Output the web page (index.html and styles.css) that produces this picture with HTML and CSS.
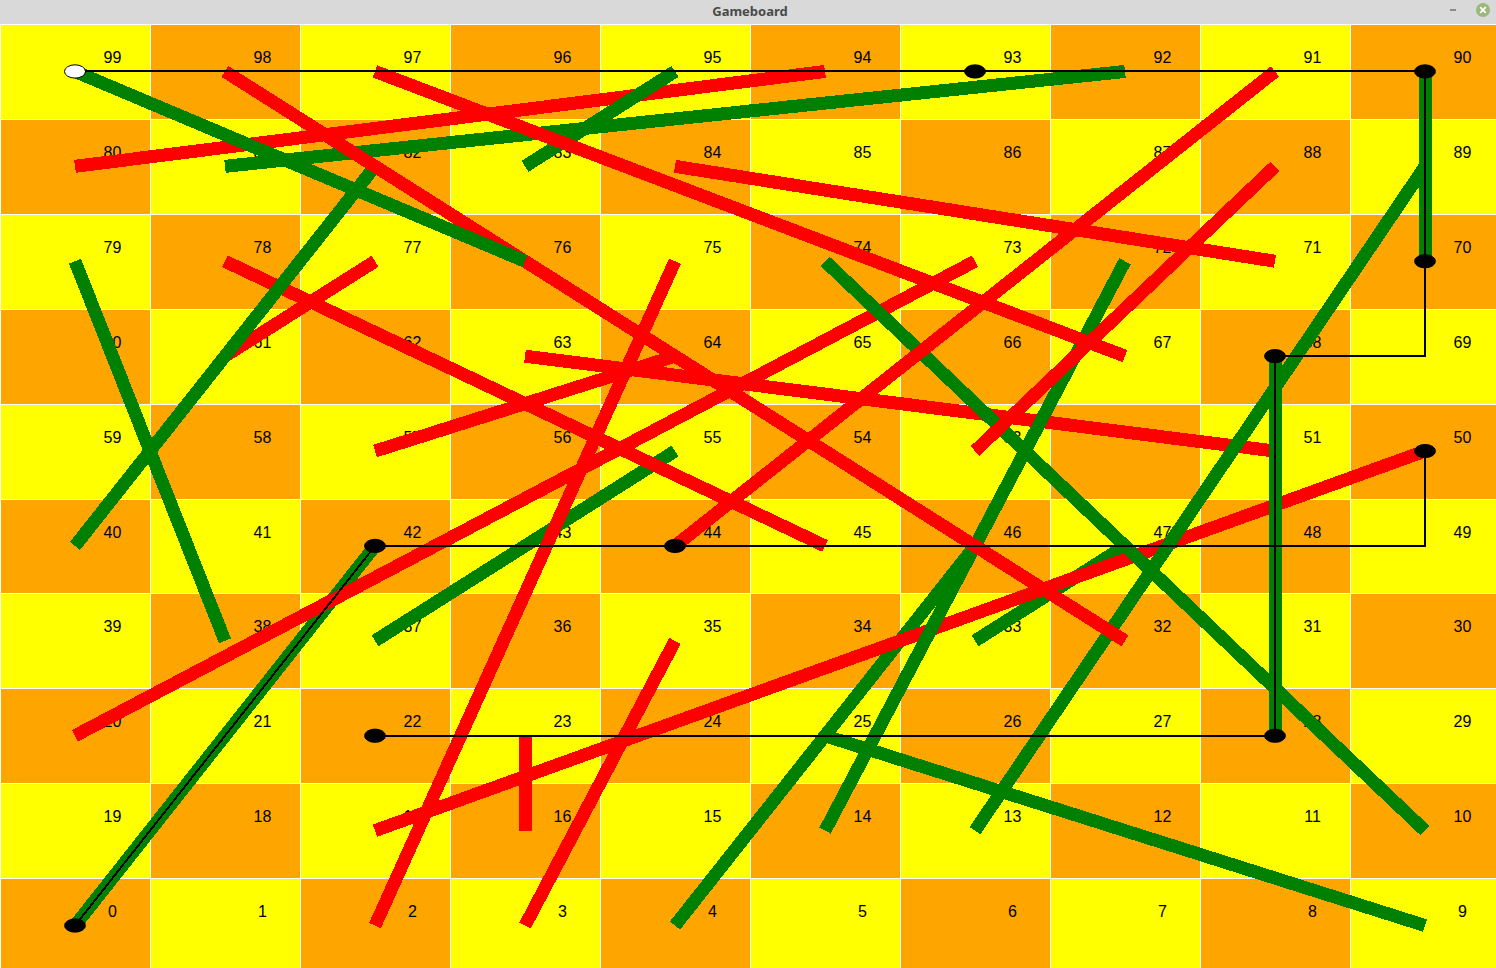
FILE: index.html
```html
<!DOCTYPE html>
<html lang="en">
<head>
<meta charset="utf-8">
<title>Gameboard</title>
<link rel="stylesheet" href="styles.css">
</head>
<body>
<header class="titlebar">
  <h1 class="title">Gameboard</h1>
  <div class="controls">
    <button class="control" type="button" aria-label="Minimize">
      <svg viewBox="0 0 14 14" width="14" height="14"><path d="M4 7h6" stroke="#8a8a8a" stroke-width="2"/></svg>
    </button>
    <button class="control" type="button" aria-label="Close">
      <svg viewBox="0 0 14 14" width="14" height="14"><circle cx="7" cy="7" r="7" fill="#9ab87c"/><path d="M4.2 4.2l5.6 5.6M9.8 4.2l-5.6 5.6" stroke="#fff" stroke-width="1.8"/></svg>
    </button>
  </div>
</header>
<main class="viewport">
  <div class="board">
    <div class="row"><span>99</span><span>98</span><span>97</span><span>96</span><span>95</span><span>94</span><span>93</span><span>92</span><span>91</span><span>90</span></div>
    <div class="row"><span>80</span><span>81</span><span>82</span><span>83</span><span>84</span><span>85</span><span>86</span><span>87</span><span>88</span><span>89</span></div>
    <div class="row"><span>79</span><span>78</span><span>77</span><span>76</span><span>75</span><span>74</span><span>73</span><span>72</span><span>71</span><span>70</span></div>
    <div class="row"><span>60</span><span>61</span><span>62</span><span>63</span><span>64</span><span>65</span><span>66</span><span>67</span><span>68</span><span>69</span></div>
    <div class="row"><span>59</span><span>58</span><span>57</span><span>56</span><span>55</span><span>54</span><span>53</span><span>52</span><span>51</span><span>50</span></div>
    <div class="row"><span>40</span><span>41</span><span>42</span><span>43</span><span>44</span><span>45</span><span>46</span><span>47</span><span>48</span><span>49</span></div>
    <div class="row"><span>39</span><span>38</span><span>37</span><span>36</span><span>35</span><span>34</span><span>33</span><span>32</span><span>31</span><span>30</span></div>
    <div class="row"><span>20</span><span>21</span><span>22</span><span>23</span><span>24</span><span>25</span><span>26</span><span>27</span><span>28</span><span>29</span></div>
    <div class="row"><span>19</span><span>18</span><span>17</span><span>16</span><span>15</span><span>14</span><span>13</span><span>12</span><span>11</span><span>10</span></div>
    <div class="row"><span>0</span><span>1</span><span>2</span><span>3</span><span>4</span><span>5</span><span>6</span><span>7</span><span>8</span><span>9</span></div>

    <!-- 100 units per square in both directions -->
    <svg class="overlay" viewBox="0 0 1000 1000" preserveAspectRatio="none" aria-hidden="true">
      <!-- snakes and ladders, ordered by their upper square -->
      <path class="snake" d="M350 750L350 850"/>
      <path class="ladder" d="M550 750L950 950"/>
      <path class="snake" d="M450 650L350 950"/>
      <path class="ladder" d="M50 950L250 550"/>
      <path class="ladder" d="M450 950L650 550"/>
      <path class="ladder" d="M650 650L750 550"/>
      <path class="snake" d="M950 450L250 850"/>
      <path class="ladder" d="M250 650L450 450"/>
      <path class="snake" d="M350 350L850 450"/>
      <path class="snake" d="M450 350L250 450"/>
      <path class="ladder" d="M850 750L850 350"/>
      <path class="ladder" d="M550 850L750 250"/>
      <path class="snake" d="M650 250L50 750"/>
      <path class="ladder" d="M950 850L550 250"/>
      <path class="snake" d="M450 250L250 950"/>
      <path class="snake" d="M250 250L150 350"/>
      <path class="snake" d="M150 250L550 550"/>
      <path class="ladder" d="M150 650L50 250"/>
      <path class="ladder" d="M50 550L250 150"/>
      <path class="snake" d="M450 150L850 250"/>
      <path class="snake" d="M850 150L650 450"/>
      <path class="ladder" d="M650 850L950 150"/>
      <path class="ladder" d="M950 250L950 50"/>
      <path class="snake" d="M850 50L450 550"/>
      <path class="ladder" d="M150 150L750 50"/>
      <path class="snake" d="M550 50L50 150"/>
      <path class="ladder" d="M350 150L450 50"/>
      <path class="snake" d="M250 50L750 350"/>
      <path class="snake" d="M150 50L750 650"/>
      <path class="ladder" d="M350 250L50 50"/>

      <!-- moves -->
      <path class="move" d="M50 950L250 550H950V450"/>
      <path class="move" d="M250 750H850V350H950V50H50"/>

      <!-- stops -->
      <g class="stops">
        <circle cx="50" cy="950" r="7"/>
        <circle cx="250" cy="550" r="7"/>
        <circle cx="450" cy="550" r="7"/>
        <circle cx="950" cy="450" r="7"/>
        <circle cx="250" cy="750" r="7"/>
        <circle cx="850" cy="750" r="7"/>
        <circle cx="850" cy="350" r="7"/>
        <circle cx="950" cy="250" r="7"/>
        <circle cx="950" cy="50" r="7"/>
        <circle cx="650" cy="50" r="7"/>
        <circle class="current" cx="50" cy="50" r="7"/>
      </g>
    </svg>
  </div>
</main>
</body>
</html>
```
FILE: styles.css
```css
* {
  box-sizing: border-box;
}

body {
  margin: 0;
  height: 100vh;
  display: flex;
  flex-direction: column;
  overflow: hidden;
  font-family: "Liberation Sans", Arial, sans-serif;
}

.titlebar {
  display: grid;
  grid-template-columns: 1fr auto 1fr;
  align-items: start;
  height: 24px;
  padding: 0 6px 0 10px;
  background: #d9d9d9;
}

.title {
  grid-column: 2;
  margin: 0;
  font: bold 13px/22px "Noto Sans", "Open Sans", sans-serif;
  color: #4a4a4a;
}

.controls {
  display: flex;
  justify-content: flex-end;
  gap: 16px;
  padding-top: 3px;
}

.control {
  display: flex;
  padding: 0;
  border: 0;
  background: none;
}

.viewport {
  flex: 1;
  min-height: 0;
  overflow: hidden;
}

/* The board runs slightly past the right and bottom window edges. */
.board {
  position: relative;
  display: grid;
  grid-template-rows: repeat(10, 1fr);
  width: calc(100% + 4px);
  height: calc(100% + 5px);
}

.row {
  display: grid;
  grid-template-columns: repeat(10, 1fr);
}

.row span {
  padding: 23px 1px 0 50%;
  border: solid #fff;
  border-width: 1px 0 0 1px;
  background: #ff0;
  font-size: 16px;
  line-height: 20px;
  text-align: center;
  color: #000;
}

.row:nth-child(odd) span:nth-child(even),
.row:nth-child(even) span:nth-child(odd) {
  background: #ffa500;
}

.overlay {
  position: absolute;
  inset: 0;
  width: 100%;
  height: 100%;
  shape-rendering: crispEdges;
}

.overlay path {
  fill: none;
  vector-effect: non-scaling-stroke;
}

.overlay .snake {
  stroke: #f00;
  stroke-width: 13px;
}

.overlay .ladder {
  stroke: #008000;
  stroke-width: 13px;
}

.overlay .move {
  stroke: #000;
  stroke-width: 2px;
}

.stops circle {
  fill: #000;
  stroke: #000;
  stroke-width: 1px;
  vector-effect: non-scaling-stroke;
}

.stops .current {
  fill: #fff;
}
```
